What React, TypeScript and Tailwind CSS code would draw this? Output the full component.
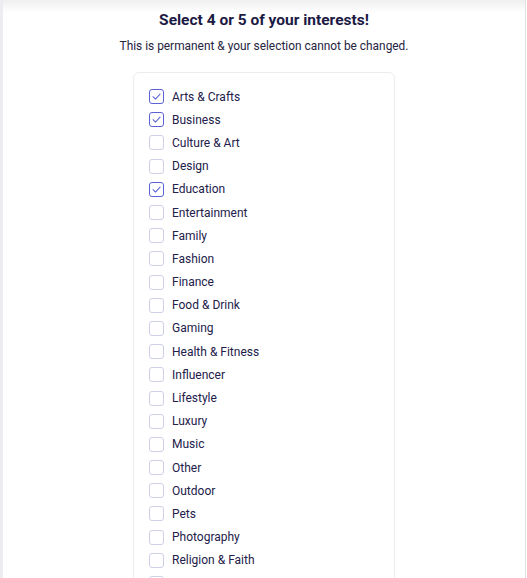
import React from 'react'

const interests = [
  'Arts & Crafts',
  'Business',
  'Culture & Art',
  'Design',
  'Education',
  'Entertainment',
  'Family',
  'Fashion',
  'Finance',
  'Food & Drink',
  'Gaming',
  'Health & Fitness',
  'Influencer',
  'Lifestyle',
  'Luxury',
  'Music',
  'Other',
  'Outdoor',
  'Pets',
  'Photography',
  'Religion & Faith',
  'Science',
]

const selected = ['Arts & Crafts', 'Business', 'Education']

function Box({ checked }: { checked: boolean }) {
  return (
    <span
      className={
        'flex h-[15px] w-[15px] shrink-0 items-center justify-center rounded-[3px] border bg-white ' +
        (checked ? 'border-[#5a62d6]' : 'border-[#cdd0e6]')
      }
    >
      {checked && (
        <svg width="11" height="11" viewBox="0 0 12 12" fill="none">
          <path d="M2.2 6.2 L4.9 8.8 L9.9 3.4" stroke="#5a62d6" strokeWidth="1.1" strokeLinecap="round" strokeLinejoin="round" />
        </svg>
      )}
    </span>
  )
}

export default function App() {
  return (
    <div className="flex h-[578px] overflow-hidden bg-white font-['Roboto',sans-serif]">
      <div className="w-[3px] shrink-0 bg-[#ececf3]" />
      <main className="flex flex-1 flex-col items-center bg-[linear-gradient(to_bottom,#efefef,#ffffff_13px)] pt-2">
        <h1 className="text-[15.5px] font-bold leading-6 text-[#1c1a45]">Select 4 or 5 of your interests!</h1>
        <p className="mt-1.5 text-[11.9px] leading-4 text-[#26243f]">
          This is permanent &amp; your selection cannot be changed.
        </p>
        <div className="mt-[18px] w-[262px] rounded-md border border-[#ececf0] bg-white pl-[15px] pt-3">
          {interests.map(name => (
            <label key={name} className="flex h-[23.2px] items-center gap-2">
              <Box checked={selected.includes(name)} />
              <span className="text-[12px] text-[#22204a]">{name}</span>
            </label>
          ))}
        </div>
      </main>
      <div className="w-px shrink-0 bg-[#e2e2e2]" />
      <div className="w-px shrink-0 bg-white" />
    </div>
  )
}
